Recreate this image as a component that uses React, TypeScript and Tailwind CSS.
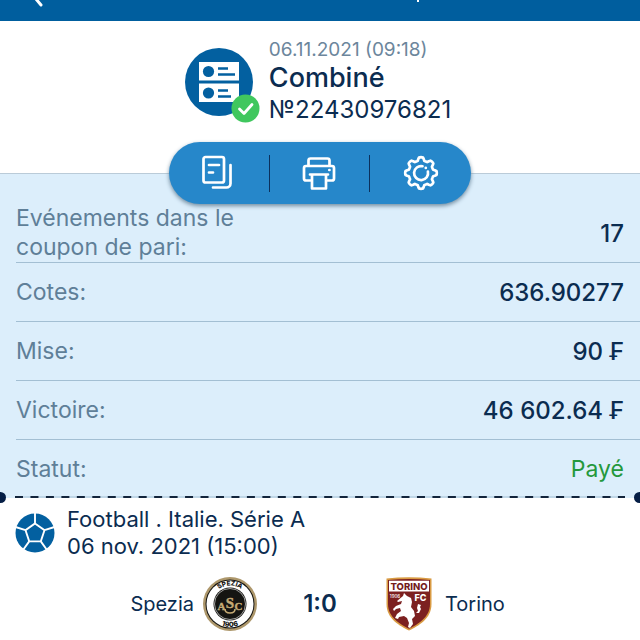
import type { ReactNode } from "react";

function Row({ label, value, tone = "text-[#0b2c50]", last = false }: { label: ReactNode; value: string; tone?: string; last?: boolean }) {
  return (
    <div className={`flex items-center justify-between pr-4 ${last ? "min-h-[58px]" : "min-h-[59px] border-b border-[#a3bfd3]"}`}>
      <dt className="text-[23px] text-[#5f7f98]">{label}</dt>
      <dd className={`${tone} ${last ? "text-[23px]" : "text-[24px] font-medium"}`}>{value}</dd>
    </div>
  );
}

function CouponIcon() {
  return (
    <svg viewBox="0 0 76 76" className="h-[76px] w-[76px] shrink-0" aria-hidden="true">
      <circle cx="34" cy="34" r="34" fill="#0360a0" />
      <path d="M14 14h40v18.500H14zM14 35.500h40V54H14z" fill="#fff" />
      <circle cx="23.500" cy="23.500" r="5.600" fill="#0360a0" />
      <circle cx="23.500" cy="45" r="5.600" fill="#0360a0" />
      <path d="M33 20.500h10M33 26.500h17M33 42.500h10M33 48.500h13" stroke="#0360a0" strokeWidth="2.400" />
      <circle cx="60.500" cy="60.500" r="14" fill="#40c75e" />
      <path d="M54.500 61l4.500 4.500 8-9" fill="none" stroke="#fff" strokeWidth="2.800" strokeLinecap="round" strokeLinejoin="round" />
    </svg>
  );
}

function CopyIcon() {
  return (
    <svg viewBox="0 0 36 36" className="h-9 w-9" fill="none" stroke="#fff" strokeWidth="2.700" strokeLinecap="round" strokeLinejoin="round" aria-hidden="true">
      <rect x="4.500" y="2" width="20.500" height="25.500" rx="2" />
      <path d="M10 10h10M10 17.500h4M31.500 10v18.500a4 4 0 0 1-4 4H14" />
    </svg>
  );
}

function PrintIcon() {
  return (
    <svg viewBox="0 0 36 36" className="h-9 w-9" fill="none" stroke="#fff" strokeWidth="2.700" strokeLinecap="round" strokeLinejoin="round" aria-hidden="true">
      <path d="M7.500 10V5.500q0-2 2-2h17q2 0 2 2V10M9.500 25.500H5q-2 0-2-2V13q0-2 2-2h26q2 0 2 2v10.500q0 2-2 2h-4.500" />
      <path d="M9 19.500h18M11 20v13.500h14V20" />
      <path d="M28.300 15h.2" />
    </svg>
  );
}

function GearIcon() {
  const points = Array.from({ length: 97 }, (_, i) => {
    const a = (i / 96) * Math.PI * 2 - Math.PI / 2;
    const r = 14.1 + 1.7 * Math.tanh(2.5 * Math.cos(8 * a));
    return `${(18 + r * Math.cos(a)).toFixed(2)},${(18 + r * Math.sin(a)).toFixed(2)}`;
  }).join(" ");
  return (
    <svg viewBox="0 0 36 36" className="h-9 w-9" fill="none" stroke="#fff" strokeWidth="2.700" strokeLinecap="round" strokeLinejoin="round" aria-hidden="true">
      <polygon points={points} />
      <path d="M19.500 11.200A7 7 0 1 0 24.900 16.500M22.800 12.800v.1" />
    </svg>
  );
}

function BallIcon() {
  return (
    <svg viewBox="0 0 40 40" className="h-10 w-10 shrink-0" aria-hidden="true">
      <circle cx="20" cy="20" r="19.500" fill="#0360a0" />
      <path d="M20 10.500l9.500 6.700-3.700 11.200H14.200l-3.700-11.200zM20 10.500V0M29.500 17.200l10-3.200M25.800 28.400l6 8.300M14.200 28.400l-6 8.300M10.500 17.200L.5 14" fill="none" stroke="#fff" strokeWidth="1.900" />
    </svg>
  );
}

function SpeziaCrest() {
  return (
    <svg viewBox="0 0 56 56" className="h-14 w-14" role="img" aria-label="Spezia">
      <defs>
        <path id="spezia-top" d="M9.500 28a18.500 18.500 0 0 1 37 0" />
        <path id="spezia-bottom" d="M5 28a23 23 0 0 0 46 0" />
      </defs>
      <circle cx="28" cy="28" r="27" fill="#ad976b" />
      <circle cx="28" cy="28" r="24.500" fill="#151512" />
      <circle cx="28" cy="28" r="23.500" fill="#fff" />
      <circle cx="28" cy="28" r="16.500" fill="#151512" />
      <circle cx="28" cy="28" r="15.500" fill="none" stroke="#fff" strokeWidth="0.600" />
      <g fontFamily="Inter, sans-serif" fontWeight="800" textAnchor="middle">
        <text fontSize="6.500" fill="#151512"><textPath href="#spezia-top" startOffset="50%">SPEZIA</textPath></text>
        <text fontSize="7" fill="#151512"><textPath href="#spezia-bottom" startOffset="50%">1906</textPath></text>
        <g fill="#c5aa75" stroke="#c5aa75" strokeWidth="0.400" fontFamily="Liberation Serif, serif" fontWeight="700">
          <text x="19.500" y="34" fontSize="11">A</text>
          <text x="28" y="32" fontSize="15">S</text>
          <text x="36.500" y="34" fontSize="11">C</text>
        </g>
      </g>
      <path d="M23 33q0 4 5 4t5-4" fill="none" stroke="#c5aa75" strokeWidth="1.600" />
    </svg>
  );
}

function TorinoCrest() {
  return (
    <svg viewBox="0 0 48 56" className="h-14 w-12" role="img" aria-label="Torino FC">
      <path d="M1.500 2.500Q24 0 46.500 2.500V28C46.500 43 33 50 24 54.500 15 50 1.500 43 1.500 28z" fill="#d99b43" />
      <path d="M3 4q21-2.200 42 0v24C45 41.500 32.500 48.500 24 52.800 15.500 48.500 3 41.500 3 28z" fill="#7c2020" />
      <path d="M4 4.800h40v10.700H4z" fill="#fff" />
      <g fontFamily="Inter, sans-serif" fontWeight="800" textAnchor="middle">
        <text x="24" y="13.500" fontSize="9.500" fill="#751d1d">TORINO</text>
        <text x="10" y="21.500" fontSize="4.500" fontWeight="500" fill="#fff">1906</text>
        <text x="35.500" y="25" fontSize="9" fill="#fff">FC</text>
      </g>
      <path d="M18 20l1-3 3 3 4 2 1 4-1 5 3 4 1 5-3 3 1 5-3 4-2-1 1-4-2-5-3-2-5 1-1 2-3-1 2-4 4-3-1-3-4 1-2 2-1-2 3-3 5-2 1-3-4 1-1-1z" fill="#fff" />
      <path d="M31 37l2-2-1-3 1-4 3 1-1 2 1 2-2 4z" fill="#fff" />
    </svg>
  );
}

export default function App() {
  return (
    <main className="min-h-screen overflow-hidden bg-white font-[Inter,'Noto_Sans',sans-serif] text-[#0b2c50]">
      <header className="h-[21px] overflow-hidden bg-[#005e9e]">
        <svg className="h-[21px] w-full" aria-hidden="true">
          <path d="M36-1L41 5" stroke="#fff" strokeWidth="3" strokeLinecap="round" />
          <path d="M418 0v2" stroke="#fff" strokeWidth="2" />
        </svg>
      </header>

      <section className="flex h-[152px] items-start justify-center gap-2 pr-1 pt-3">
        <div className="pt-[15px]"><CouponIcon /></div>
        <div className="pt-[5px]">
          <p className="text-[19px] leading-6 text-[#6c869c]">06.11.2021 (09:18)</p>
          <h1 className="text-[27px] font-medium leading-8">Combiné</h1>
          <p className="text-[24px] leading-8">№22430976821</p>
        </div>
      </section>

      <section className="border-t border-[#bacbd8] bg-[#dceefb]">
        <div className="flex justify-center">
          <div className="-mt-8 grid h-[62px] w-[302px] grid-cols-3 content-center divide-x divide-[#0b315d] rounded-full bg-[#2687ca] shadow-[0_2px_4px_#718ca0]">
            <button aria-label="Copier" className="flex h-[37px] items-center justify-center pr-1"><CopyIcon /></button>
            <button aria-label="Imprimer" className="flex h-[37px] items-center justify-center"><PrintIcon /></button>
            <button aria-label="Paramètres" className="flex h-[37px] items-center justify-center"><GearIcon /></button>
          </div>
        </div>
        <dl className="pl-4 leading-[29px]">
          <Row label={<>Evénements dans le<br />coupon de pari:</>} value="17" />
          <Row label="Cotes:" value="636.90277" />
          <Row label="Mise:" value="90 ₣" />
          <Row label="Victoire:" value="46 602.64 ₣" />
          <Row label="Statut:" value="Payé" tone="text-[#24983c]" last />
        </dl>
      </section>

      <div className="-mt-[7px] flex h-3 items-center justify-between overflow-hidden">
        <span className="-ml-[5px] h-[11px] w-[11px] shrink-0 rounded-full bg-[#051e45]" />
        <svg className="mx-[9px] h-[2px] min-w-0 flex-1" aria-hidden="true">
          <path d="M0 1h2000" stroke="#a3bfd3" strokeWidth="1" />
          <path d="M0 1h2000" stroke="#12243b" strokeWidth="2" strokeDasharray="8 7.460" />
        </svg>
        <span className="-mr-[5px] h-[11px] w-[11px] shrink-0 rounded-full bg-[#051e45]" />
      </div>

      <section>
        <div className="flex items-center gap-3 pl-[15px] pt-[3px]">
          <BallIcon />
          <div className="text-[22px] leading-[27px]">
            <h2>Football . Italie. Série A</h2>
            <p>06 nov. 2021 (15:00)</p>
          </div>
        </div>
        <div className="grid grid-cols-[1fr_124px_1fr] items-center pt-4 text-[20px]">
          <div className="flex items-center justify-end gap-2"><span>Spezia</span><SpeziaCrest /></div>
          <strong className="text-center text-[24px] font-semibold">1:0</strong>
          <div className="flex items-center gap-3 pl-[3px]"><TorinoCrest /><span>Torino</span></div>
        </div>
      </section>
    </main>
  );
}
